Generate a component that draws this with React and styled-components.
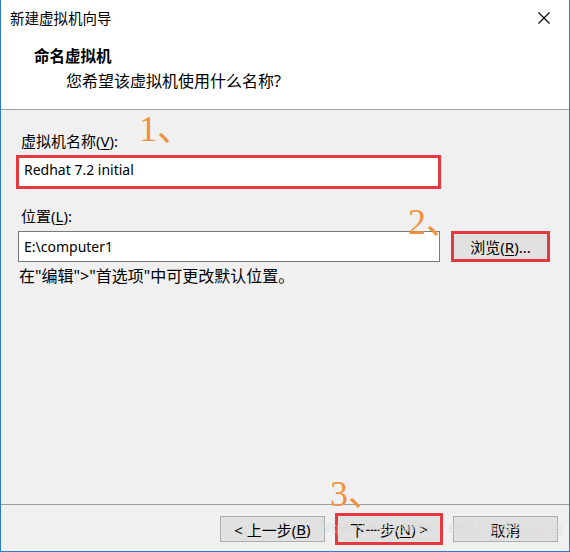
import React from "react";
import styled, { createGlobalStyle, css } from "styled-components";

const GlobalStyle = createGlobalStyle`
  html, body {
    margin: 0;
    padding: 0;
    background: #ffffff;
  }
  body {
    font-family: "Noto Sans", "Noto Sans CJK SC", sans-serif;
  }
`;

const RED = "#e5393f";

const Window = styled.div`
  position: relative;
  width: 570px;
  height: 552px;
  box-sizing: border-box;
  border: 1px solid #2b7bd1;
  border-top: none;
  background: #f0f0f0;
  display: flex;
  flex-direction: column;
  font-size: 15px;
  color: #000;
  overflow: hidden;
`;

const TitleBar = styled.div`
  height: 38px;
  background: #fff;
  display: flex;
  align-items: center;
  justify-content: space-between;
  padding: 0 13px 3px 9px;
  box-sizing: border-box;
`;

const Title = styled.span`
  font-size: 14.5px;
`;

const CloseButton = styled.button`
  border: none;
  background: none;
  padding: 0;
  width: 24px;
  height: 24px;
  display: flex;
  align-items: center;
  justify-content: center;
`;

const Header = styled.div`
  height: 72px;
  background: #fff;
  box-sizing: border-box;
  padding: 8px 0 0 33px;
  border-bottom: 1px solid #a0a0a0;
`;

const Heading = styled.div`
  font-weight: 700;
  font-size: 15.5px;
  line-height: 20px;
`;

const SubHeading = styled.div`
  margin: 5px 0 0 32px;
  font-size: 16px;
  line-height: 20px;
`;

const Body = styled.div`
  flex: 1;
  padding: 21px 15px 0 15px;
  display: flex;
  flex-direction: column;
`;

const Label = styled.div`
  margin-left: 5px;
  margin-top: ${(p) => p.$top || 0}px;
  line-height: 20px;
  u {
    text-decoration: underline;
    text-underline-offset: 2px;
  }
`;

const TextField = styled.div`
  box-sizing: border-box;
  height: ${(p) => p.$height}px;
  width: ${(p) => p.$width}px;
  margin-left: ${(p) => p.$left || 0}px;
  background: #fff;
  border: 1px solid #7a7a7a;
  padding-left: 5px;
  display: flex;
  align-items: center;
  font-size: 14px;
  ${(p) => p.$marked && css`
    border: 3px solid ${RED};
    padding-bottom: 5px;
  `}
`;

const NameField = styled.div`
  margin-top: 4px;
`;

const Row = styled.div`
  margin-top: 5px;
  display: flex;
  align-items: center;
  gap: 12px;
`;

const Hint = styled.div`
  margin: 4px 0 0 3px;
  font-size: 16px;
  line-height: 20px;
`;

const Footer = styled.div`
  border-top: 1px solid #a0a0a0;
  height: 47px;
  box-sizing: border-box;
  display: flex;
  justify-content: flex-end;
  align-items: flex-start;
  gap: 11px;
  padding: 11px 11px 0 0;
`;

const Button = styled.button`
  box-sizing: border-box;
  width: ${(p) => p.$width || 105}px;
  height: ${(p) => p.$height || 26}px;
  margin-top: ${(p) => p.$top || 0}px;
  background: #e1e1e1;
  border: 1px solid #adadad;
  font-family: "Noto Sans", "Noto Sans CJK SC", sans-serif;
  font-size: 15px;
  color: #000;
  padding: 0;
  display: flex;
  align-items: center;
  justify-content: center;
  ${(p) => p.$focused && css`border-color: #0078d7;`}
  ${(p) => p.$marked && css`
    outline: 3px solid ${RED};
    outline-offset: -2px;
  `}
  u {
    text-decoration: underline;
    text-underline-offset: 2px;
  }
`;

const Note = styled.span`
  position: absolute;
  left: ${(p) => p.$x}px;
  top: ${(p) => p.$y}px;
  font-family: "Liberation Serif", "Noto Sans CJK SC", serif;
  font-size: 36px;
  line-height: 1;
  color: #f0913f;
  pointer-events: none;
`;

const Watermark = styled.span`
  position: absolute;
  left: ${(p) => p.$x}px;
  top: ${(p) => p.$y}px;
  font-size: 13px;
  color: rgba(255, 255, 255, 0.6);
  text-shadow: 0 0 1px rgba(120, 120, 120, 0.35);
  white-space: nowrap;
  pointer-events: none;
`;

function CloseIcon() {
  return (
    <svg width="12" height="12" viewBox="0 0 12 12">
      <path d="M0.5 0.5 L11.5 11.5 M11.5 0.5 L0.5 11.5" stroke="#000" strokeWidth="1.1" fill="none" />
    </svg>
  );
}

export default function App() {
  return (
    <>
      <GlobalStyle />
      <Window>
        <TitleBar>
          <Title>新建虚拟机向导</Title>
          <CloseButton aria-label="关闭">
            <CloseIcon />
          </CloseButton>
        </TitleBar>
        <Header>
          <Heading>命名虚拟机</Heading>
          <SubHeading>您希望该虚拟机使用什么名称?</SubHeading>
        </Header>
        <Body>
          <Label>
            虚拟机名称(<u>V</u>):
          </Label>
          <NameField>
            <TextField $marked $width={425} $height={34}>
              Redhat 7.2 initial
            </TextField>
          </NameField>
          <Label $top={17}>
            位置(<u>L</u>):
          </Label>
          <Row>
            <TextField $left={2} $width={422} $height={31}>
              E:\computer1
            </TextField>
            <Button $width={97} $height={29} $focused $marked>
              浏览(<u>R</u>)...
            </Button>
          </Row>
          <Hint>在"编辑"&gt;"首选项"中可更改默认位置。</Hint>
        </Body>
        <Footer>
          <Button>
            &lt; 上一步(<u>B</u>)
          </Button>
          <Button $marked $width={106} $height={30} $top={-2}>
            下一步(<u>N</u>) &gt;
          </Button>
          <Button>取消</Button>
        </Footer>

        <Note $x={138} $y={111}>1、</Note>
        <Note $x={407} $y={204}>2、</Note>
        <Note $x={329} $y={476}>3、</Note>

        <Watermark $x={318} $y={518}>https://blog.csdn.n</Watermark>
        <Watermark $x={448} $y={518}>@稀土掘金技术社区</Watermark>
      </Window>
    </>
  );
}
